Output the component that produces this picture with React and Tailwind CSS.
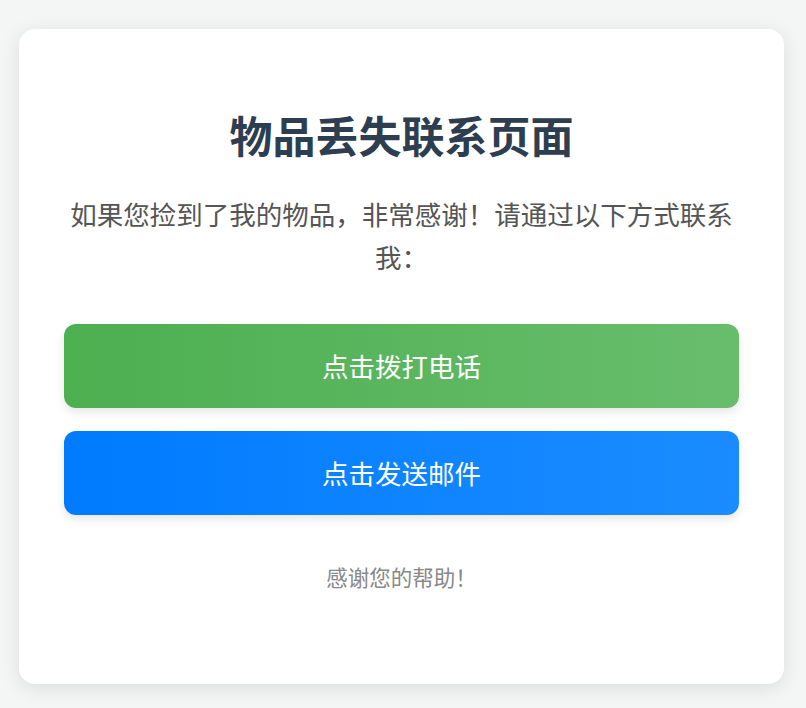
import React from 'react';

const App = () => {
  const font = { fontFamily: '"Noto Sans CJK SC", "Noto Sans", sans-serif' };

  return (
    <div className="min-h-[708px] w-full bg-[#f4f5f5] pt-[29px] pl-[19px]" style={font}>
      <div className="flex h-[655px] w-[765px] flex-col items-center rounded-[16px] bg-white px-[45px] pt-[79px] shadow-[0_4px_20px_rgba(0,0,0,0.1)]">
        {/* Title */}
        <h1 className="text-center text-[43px] font-bold leading-[53px] text-[#2c3e50]">
          物品丢失联系页面
        </h1>

        {/* Intro */}
        <p className="mt-[31px] text-center text-[26.5px] leading-[43px] text-[#555]">
          如果您捡到了我的物品，非常感谢！请通过以下方式联系我：
        </p>

        {/* Contact buttons */}
        <div className="mt-[46px] flex w-full flex-col gap-[23px]">
          <a
            href="#"
            className="flex h-[84px] w-full items-center justify-center rounded-[12px] bg-gradient-to-r from-[#4caf50] to-[#68bd6c] text-[26.5px] text-white shadow-[0_4px_10px_rgba(0,0,0,0.1)]"
          >
            点击拨打电话
          </a>
          <a
            href="#"
            className="flex h-[84px] w-full items-center justify-center rounded-[12px] bg-gradient-to-r from-[#007bff] to-[#1a8cff] text-[26.5px] text-white shadow-[0_4px_10px_rgba(0,0,0,0.1)]"
          >
            点击发送邮件
          </a>
        </div>

        {/* Footer */}
        <p className="mt-[47px] text-center text-[21.5px] leading-[30px] text-[#888]">
          感谢您的帮助！
        </p>
      </div>
    </div>
  );
};

export default App;
